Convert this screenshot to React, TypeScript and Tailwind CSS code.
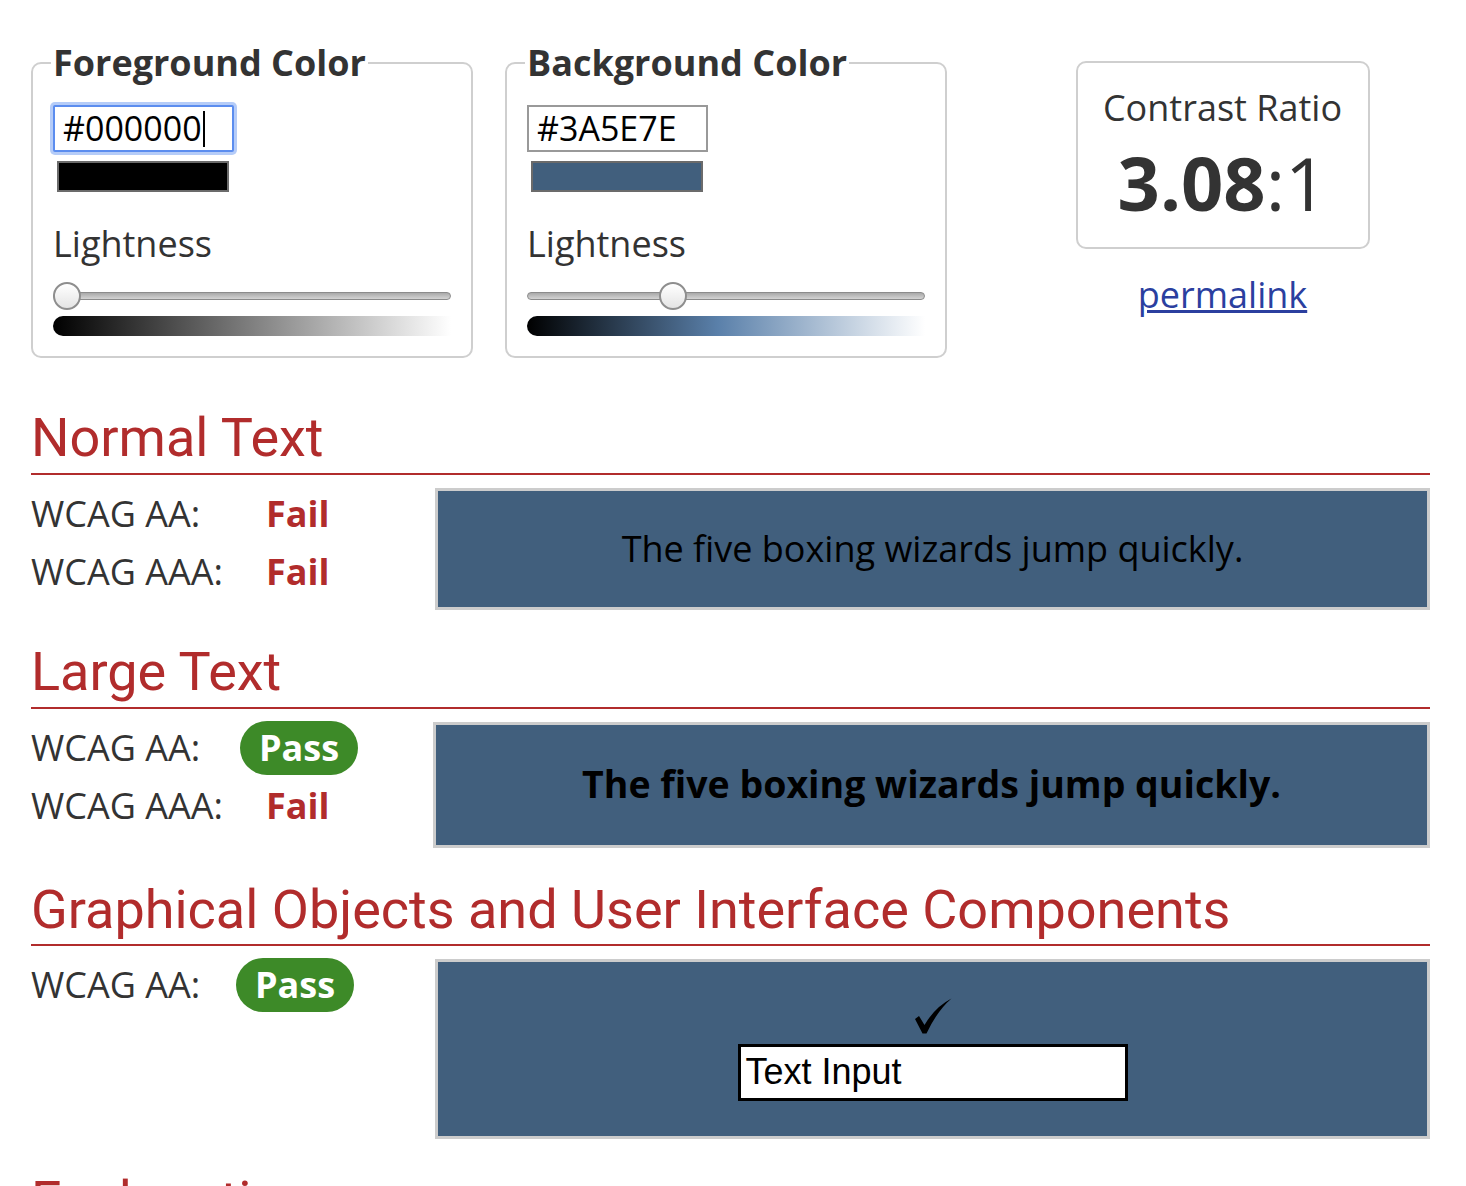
const sans = "font-['Open_Sans',sans-serif]";

function Slider({ thumbLeft, gradient }: { thumbLeft: string; gradient: string }) {
  return (
    <div className="mt-[11px]">
      <div className="relative h-[28px]">
        <div className="absolute left-0 right-0 top-[10px] h-[8px] rounded-full border border-[#8c8c8c] bg-[linear-gradient(to_bottom,#a9a9a9,#d4d4d4)]" />
        <div
          className={`absolute top-0 h-[28px] w-[28px] rounded-full border-2 border-[#8e8e8e] bg-[linear-gradient(to_bottom,#ffffff,#e4e4e4)] ${thumbLeft}`}
        />
      </div>
      <div className={`mt-[6px] h-[20px] rounded-l-full ${gradient}`} />
    </div>
  );
}

function ColorPanel({
  title,
  value,
  swatch,
  focused,
  thumbLeft,
  gradient,
}: {
  title: string;
  value: string;
  swatch: string;
  focused?: boolean;
  thumbLeft: string;
  gradient: string;
}) {
  return (
    <fieldset className="w-[442px] rounded-[10px] border-2 border-[#cfcfcf] px-[20px] pb-[20px] pt-[15px]">
      <legend className="-ml-[2px] px-[2px] text-[36px] font-bold text-[#333]">{title}</legend>
      <div
        className={
          focused
            ? "flex h-[47px] w-[181px] items-center rounded-[2px] border-2 border-[#5b8def] bg-white px-[8px] text-[34px] text-black shadow-[0_0_0_3px_rgba(91,141,239,0.45)]"
            : "flex h-[47px] w-[181px] items-center border-2 border-[#999] bg-white px-[8px] text-[34px] text-black"
        }
      >
        {value}
        {focused && <span className="ml-[1px] h-[36px] w-[2px] bg-black" />}
      </div>
      <div className={`ml-[4px] mt-[9px] h-[31px] w-[172px] border-2 border-[#6b6b6b] ${swatch}`} />
      <div className="mt-[25px] text-[36px] text-[#333]">Lightness</div>
      <Slider thumbLeft={thumbLeft} gradient={gradient} />
    </fieldset>
  );
}

function Heading({ children, className = "" }: { children: string; className?: string }) {
  return (
    <h2
      className={`border-b-2 border-[#b12c2c] pb-[2px] font-['Roboto',sans-serif] text-[54px] leading-[1.2] text-[#b12c2c] ${className}`}
    >
      {children}
    </h2>
  );
}

function Fail() {
  return <span className="pl-[26px] text-[36px] font-bold text-[#b12c2c]">Fail</span>;
}

function Pass() {
  return (
    <span className="flex h-[54px] items-center rounded-full bg-[#3d8a28] px-[19px] text-[36px] font-bold text-white">
      Pass
    </span>
  );
}

function Row({ label, result, labelWidth }: { label: string; result: React.ReactNode; labelWidth: string }) {
  return (
    <div className="flex h-[52px] items-center">
      <span className={`${labelWidth} text-[36px] text-[#333]`}>{label}</span>
      {result}
    </div>
  );
}

function CheckMark() {
  return (
    <svg width="38" height="36" viewBox="0 0 38 36" aria-hidden="true">
      <path d="M1 21 L5 18 L10.5 27 Q21 9 37.5 0.5 Q23 13 12.5 35.5 L8.5 35.5 Z" fill="#000" />
    </svg>
  );
}

export default function App() {
  return (
    <div className={`${sans} min-h-screen bg-white pl-[31px] pt-[36px] text-[#333]`}>
      <div className="flex items-start gap-[32px]">
        <ColorPanel
          title="Foreground Color"
          value="#000000"
          swatch="bg-black"
          focused
          thumbLeft="left-0"
          gradient="bg-[linear-gradient(to_right,#000000,#ffffff)]"
        />
        <ColorPanel
          title="Background Color"
          value="#3A5E7E"
          swatch="bg-[#415f7d]"
          thumbLeft="left-[132px]"
          gradient="bg-[linear-gradient(to_right,#000000,#5a80aa_48%,#ffffff)]"
        />
        <div className="mt-[25px] flex flex-1 flex-col items-center">
          <div className="flex h-[188px] w-[294px] flex-col items-center rounded-[10px] border-2 border-[#cfcfcf] pt-[18px]">
            <div className="text-[36px] text-[#333]">Contrast Ratio</div>
            <div className="text-[74px] leading-[1.3] text-[#333]">
              <span className="font-bold">3.08</span>:1
            </div>
          </div>
          <a href="#" className="mt-[19px] text-[36px] text-[#2b3f9f] underline">
            permalink
          </a>
        </div>
      </div>

      <div className="w-[1399px]">
        <Heading className="mt-[48px]">Normal Text</Heading>
        <div className="mt-[13px] flex items-start">
          <div className="flex w-[404px] flex-col gap-[6px]">
            <Row label="WCAG AA:" labelWidth="w-[209px]" result={<Fail />} />
            <Row label="WCAG AAA:" labelWidth="w-[209px]" result={<Fail />} />
          </div>
          <div className="flex h-[122px] flex-1 items-center justify-center border-[3px] border-[#cccccc] bg-[#415f7d] text-[36px] text-black">
            The five boxing wizards jump quickly.
          </div>
        </div>

        <Heading className="mt-[30px]">Large Text</Heading>
        <div className="mt-[13px] flex items-start">
          <div className="flex w-[402px] flex-col gap-[6px]">
            <Row label="WCAG AA:" labelWidth="w-[209px]" result={<Pass />} />
            <Row label="WCAG AAA:" labelWidth="w-[209px]" result={<Fail />} />
          </div>
          <div className="flex h-[126px] flex-1 items-center justify-center border-[3px] border-[#cccccc] bg-[#415f7d] text-[37.5px] font-bold text-black">
            The five boxing wizards jump quickly.
          </div>
        </div>

        <Heading className="mt-[30px]">Graphical Objects and User Interface Components</Heading>
        <div className="mt-[13px] flex items-start">
          <div className="flex w-[404px] flex-col gap-[6px]">
            <Row label="WCAG AA:" labelWidth="w-[205px]" result={<Pass />} />
          </div>
          <div className="flex h-[180px] flex-1 flex-col items-center justify-center border-[3px] border-[#cccccc] bg-[#415f7d]">
            <CheckMark />
            <div className="mt-[10px] flex h-[57px] w-[390px] items-center border-[3px] border-black bg-white px-[5px] font-['Liberation_Sans',Arial,sans-serif] text-[36px] text-black">
              Text Input
            </div>
          </div>
        </div>

        <Heading className="mt-[30px]">Explanation</Heading>
        <div className="h-[200px]" />
      </div>
    </div>
  );
}
